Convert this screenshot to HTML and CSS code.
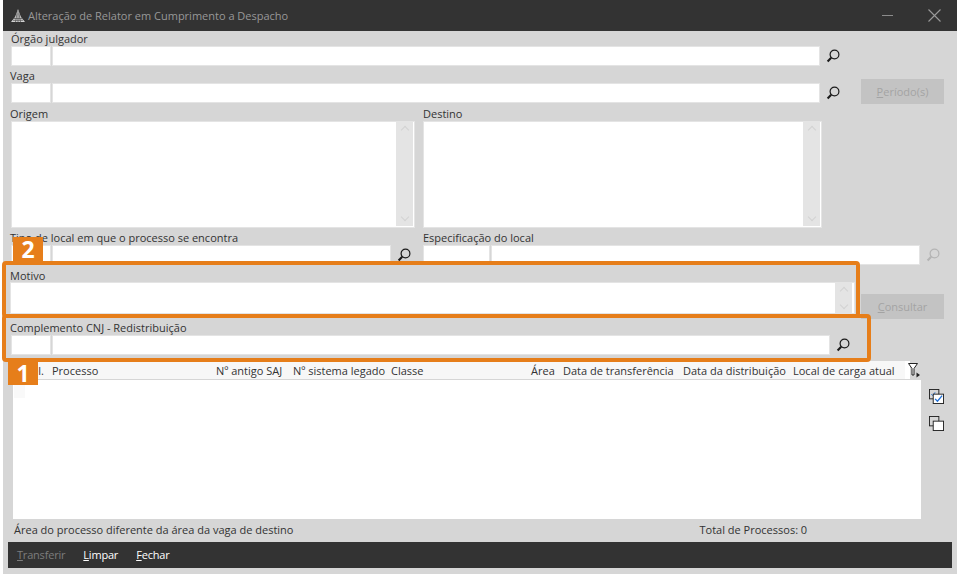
FILE: index.html
```html
<!DOCTYPE html>
<html lang="pt-BR">
  <head>
    <meta charset="UTF-8" />
    <meta name="viewport" content="width=device-width, initial-scale=1.0" />
    <title>Alteração de Relator em Cumprimento a Despacho</title>
    <link rel="stylesheet" href="styles.css">
  </head>
  <body>
    <svg class="icon-defs" width="0" height="0">
      <symbol id="lupa" viewBox="0 0 14 14">
        <circle cx="8.5" cy="5.5" r="4.4" fill="none" stroke="currentColor" stroke-width="1.2" />
        <path d="M5.2 8.8 1.6 12.4" fill="none" stroke="currentColor" stroke-width="2.1" />
      </symbol>
    </svg>

    <div class="window">
      <!-- Title bar -->
      <div class="titlebar">
        <svg class="logo" viewBox="0 0 14 14">
          <path d="M7 0 8.4 4 10 8 14 13H0L4 8 5.6 4Z" fill="#d2d2d2" />
          <path d="M3 9.5H11M2 11.3H12M6 4.5 4.5 13M8 4.5 9.5 13M7 2V13" stroke="#4a4a4a" stroke-width=".7" fill="none" />
        </svg>
        <span class="window-title">Alteração de Relator em Cumprimento a Despacho</span>
        <svg class="win-btn minimize" viewBox="0 0 11 11"><path d="M0 5.5H11" stroke="#8c8c8c" /></svg>
        <svg class="win-btn close" viewBox="0 0 13 13"><path d="M.5 .5 12.5 12.5M12.5 .5 .5 12.5" stroke="#9a9a9a" stroke-width="1.1" /></svg>
      </div>

      <div class="form">
        <div class="row row-orgao">
          <div class="field field-main">
            <label class="label first-label">Órgão julgador</label>
            <div class="inputs">
              <div class="input code"></div>
              <div class="input grow"></div>
              <svg class="lupa"><use href="#lupa" /></svg>
            </div>
          </div>
        </div>

        <div class="row row-vaga">
          <div class="field field-main">
            <label class="label">Vaga</label>
            <div class="inputs">
              <div class="input code"></div>
              <div class="input grow"></div>
              <svg class="lupa"><use href="#lupa" /></svg>
            </div>
          </div>
          <button class="side-btn periodo" disabled><u>P</u>eríodo(s)</button>
        </div>

        <div class="row row-origem">
          <div class="field field-origem">
            <label class="label">Origem</label>
            <div class="textarea tall">
              <div class="scrollbar"><span class="arrow up"></span><span class="arrow down"></span></div>
            </div>
          </div>
          <div class="field field-destino">
            <label class="label first-label">Destino</label>
            <div class="textarea tall">
              <div class="scrollbar"><span class="arrow up"></span><span class="arrow down"></span></div>
            </div>
          </div>
        </div>

        <div class="row row-local">
          <div class="field field-tipo">
            <label class="label">Tipo de local em que o processo se encontra</label>
            <div class="inputs">
              <div class="input code"></div>
              <div class="input grow"></div>
              <svg class="lupa"><use href="#lupa" /></svg>
            </div>
          </div>
          <div class="field field-espec">
            <label class="label first-label">Especificação do local</label>
            <div class="inputs">
              <div class="input code-wide"></div>
              <div class="input grow"></div>
              <svg class="lupa off"><use href="#lupa" /></svg>
            </div>
          </div>
        </div>

        <div class="row row-motivo">
          <div class="field field-motivo">
            <label class="label first-label">Motivo</label>
            <div class="textarea short">
              <div class="scrollbar"><span class="arrow up"></span><span class="arrow down"></span></div>
            </div>
          </div>
          <button class="side-btn consultar" disabled><u>C</u>onsultar</button>
        </div>

        <div class="row row-compl">
          <div class="field field-compl">
            <label class="label">Complemento CNJ - Redistribuição</label>
            <div class="inputs">
              <div class="input code"></div>
              <div class="input grow"></div>
              <svg class="lupa"><use href="#lupa" /></svg>
            </div>
          </div>
        </div>

        <!-- Process table -->
        <div class="table-area">
          <div class="table">
            <div class="table-head">
              <span class="col col-sel">Sel.</span>
              <span class="col col-proc">Processo</span>
              <span class="col col-antigo">Nº antigo SAJ</span>
              <span class="col col-legado">Nº sistema legado</span>
              <span class="col col-classe">Classe</span>
              <span class="col col-area">Área</span>
              <span class="col col-transf">Data de transferência</span>
              <span class="col col-distr">Data da distribuição</span>
              <span class="col col-carga">Local de carga atual</span>
              <svg class="filter" viewBox="0 0 14 16">
                <path d="M1.5 1.5H10.5L7 6.5V13H5V6.5Z" fill="#fff" stroke="#222" stroke-width="1" />
                <path d="M9.5 10.5 13 13 9.5 15.5Z" fill="#222" />
              </svg>
            </div>
            <div class="table-body">
              <div class="sel-column"></div>
            </div>
          </div>
          <div class="table-tools">
            <svg class="tool" viewBox="0 0 16 16">
              <rect x=".5" y=".5" width="10" height="10" fill="none" stroke="#222" />
              <path d="M2.5 5.5 4 7 6.5 3.5" fill="none" stroke="#1f6fd6" />
              <rect x="4.5" y="5.5" width="11" height="10" fill="#fff" stroke="#222" />
              <path d="M6.5 10.5 9 13 14 7" fill="none" stroke="#1f6fd6" stroke-width="1.4" />
            </svg>
            <svg class="tool" viewBox="0 0 16 16">
              <rect x=".5" y=".5" width="10" height="10" fill="none" stroke="#222" />
              <rect x="4.5" y="5.5" width="11" height="10" fill="#fff" stroke="#222" />
            </svg>
          </div>
        </div>

        <div class="status">
          <span class="status-msg">Área do processo diferente da área da vaga de destino</span>
          <span class="status-total">Total de Processos: 0</span>
        </div>

        <div class="footer">
          <span class="action off"><u>T</u>ransferir</span>
          <span class="action"><u>L</u>impar</span>
          <span class="action"><u>F</u>echar</span>
        </div>
      </div>
    </div>

    <!-- Tutorial highlights drawn over the form -->
    <div class="mark mark-motivo"></div>
    <div class="mark mark-compl"></div>
    <div class="badge badge-two">2</div>
    <div class="badge badge-one">1</div>
  </body>
</html>
```

FILE: styles.css
```css
/* Basic reset and styling */
* {
  box-sizing: border-box;
}

body {
  margin: 0;
  height: 574px;
  overflow: hidden;
  position: relative;
  background-color: #fff;
  font-family: "Open Sans", "Noto Sans", sans-serif;
  font-size: 11px;
  color: #333;
}

.icon-defs {
  position: absolute;
}

.window {
  margin-left: 3px;
  width: 954px;
  height: 574px;
  background-color: #d6d6d6;
}

/* Title bar */
.titlebar {
  display: flex;
  align-items: center;
  height: 31px;
  padding-left: 8px;
  background-color: #333;
}

.logo {
  width: 14px;
  height: 14px;
  flex: none;
}

.window-title {
  margin-left: 3px;
  color: #989898;
}

.win-btn {
  flex: none;
}

.minimize {
  width: 11px;
  height: 11px;
  margin-left: auto;
}

.close {
  width: 13px;
  height: 13px;
  margin-left: 35px;
  margin-right: 16px;
}

/* Form rows */
.form {
  padding-top: 2px;
}

.row {
  display: flex;
  align-items: flex-start;
}

.row-vaga {
  margin-top: 4px;
}

.row-origem {
  margin-top: 5px;
}

.row-local {
  margin-top: 4px;
}

.row-motivo {
  margin-top: 4px;
}

.row-compl {
  margin-top: 8px;
}

.label {
  display: block;
  height: 13px;
  margin-left: -1px;
  line-height: 11px;
  white-space: nowrap;
}

.first-label {
  margin-left: 0;
}

.field-motivo .label {
  line-height: 13px;
}

.field-main {
  width: 833px;
  margin-left: 8px;
}

.field-origem {
  width: 404px;
  margin-left: 8px;
}

.field-destino {
  width: 399px;
  margin-left: 8px;
}

.field-tipo {
  width: 404px;
  margin-left: 8px;
}

.field-espec {
  width: 521px;
  margin-left: 8px;
}

.field-motivo {
  width: 845px;
  margin-left: 7px;
}

.field-compl {
  width: 843px;
  margin-left: 8px;
}

.inputs {
  display: flex;
  align-items: center;
  height: 20px;
}

.input {
  height: 20px;
  background-color: #fff;
  outline: 1px solid #e4e4e4;
  outline-offset: -1px;
}

.code {
  width: 40px;
  margin-right: 1px;
  flex: none;
}

.code-wide {
  width: 67px;
  margin-right: 1px;
  flex: none;
}

.grow {
  flex: 1;
}

.lupa {
  width: 14px;
  height: 14px;
  margin-left: 6px;
  margin-right: 4px;
  flex: none;
  color: #1a1a1a;
}

.lupa.off {
  color: #b4b4b4;
}

.textarea {
  display: flex;
  justify-content: flex-end;
  background-color: #fff;
  outline: 1px solid #e4e4e4;
  outline-offset: -1px;
}

.tall {
  height: 107px;
}

.short {
  height: 32px;
}

.scrollbar {
  display: flex;
  flex-direction: column;
  justify-content: space-between;
  align-items: center;
  width: 17px;
  margin-right: 2px;
  margin-bottom: 2px;
  padding: 6px 0;
  background-color: #e4e4e4;
}

.short .scrollbar {
  margin-right: 3px;
  margin-bottom: 0;
}

.arrow {
  width: 6px;
  height: 6px;
  border-left: 1px solid #d2d2d2;
  border-top: 1px solid #d2d2d2;
}

.arrow.up {
  transform: rotate(45deg);
}

.arrow.down {
  transform: rotate(225deg);
}

.side-btn {
  width: 83px;
  height: 25px;
  padding: 0;
  border: none;
  background-color: #c3c3c3;
  font-family: inherit;
  font-size: 11px;
  color: #a3a3a3;
}

.periodo {
  margin-left: 17px;
  margin-top: 9px;
  margin-bottom: -1px;
}

.consultar {
  margin-left: 6px;
  margin-top: 25px;
  margin-bottom: -5px;
}

/* Process table */
.table-area {
  display: flex;
  margin-top: 6px;
}

.table {
  width: 918px;
  margin-left: 9px;
}

.table-head {
  display: flex;
  align-items: flex-start;
  height: 19px;
  position: relative;
  line-height: 20px;
}

.table-head::before {
  content: "";
  width: 893px;
  height: 18px;
  border-right: 5px solid #fff;
  background-color: #f7f7f7;
}

.col {
  position: absolute;
  top: 0;
  white-space: nowrap;
}

.col-sel { left: 14px; }
.col-proc { left: 40px; }
.col-antigo { left: 204px; }
.col-legado { left: 281px; }
.col-classe { left: 379px; }
.col-area { left: 519px; }
.col-transf { left: 551px; }
.col-distr { left: 671px; }
.col-carga { left: 781px; }

.filter {
  position: absolute;
  left: 895px;
  top: 1px;
  width: 14px;
  height: 16px;
}

.table-body {
  width: 908px;
  height: 139px;
  margin-left: 1px;
  background-color: #fff;
}

.sel-column {
  width: 11px;
  height: 18px;
  margin-left: 1px;
  background-color: #f9f9f9;
}

.table-tools {
  display: flex;
  flex-direction: column;
  gap: 12px;
  margin-left: -1px;
  padding-top: 28px;
}

.tool {
  width: 15px;
  height: 15px;
}

/* Status line and footer */
.status {
  display: flex;
  height: 14px;
  margin-top: 4px;
  padding-left: 11px;
  line-height: 14px;
}

.status-total {
  margin-left: 406px;
}

.footer {
  display: flex;
  align-items: center;
  gap: 18px;
  width: 944px;
  height: 26px;
  margin-top: 5px;
  margin-left: 5px;
  padding-left: 9px;
  padding-bottom: 2px;
  background-color: #333;
}

.action {
  color: #fff;
  letter-spacing: -0.2px;
}

.action.off {
  color: #7d7d7d;
}

/* Orange highlights */
.mark {
  position: absolute;
  border: 4px solid #e67e1a;
  border-radius: 4px;
}

.mark-motivo {
  left: 2px;
  top: 261px;
  width: 858px;
  height: 57px;
}

.mark-compl {
  left: 2px;
  top: 314px;
  width: 869px;
  height: 48px;
}

.badge {
  position: absolute;
  width: 30px;
  height: 24px;
  background-color: #e67e1a;
  color: #fff;
  font-size: 23px;
  font-weight: 700;
  line-height: 25px;
  text-align: center;
}

.badge-two {
  left: 13px;
  top: 237px;
}

.badge-one {
  left: 8px;
  top: 361px;
}
```
